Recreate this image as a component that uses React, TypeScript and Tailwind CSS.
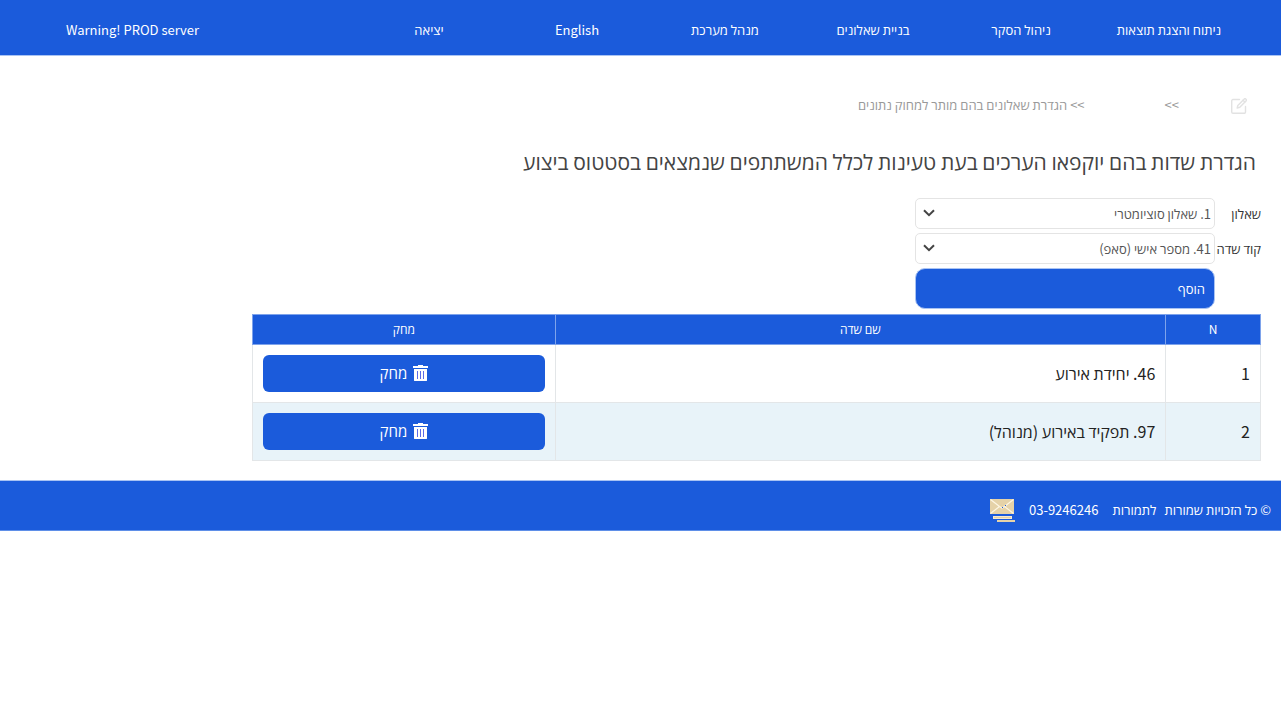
import type { ReactNode } from 'react';

const NAV_ITEMS = [
  'ניתוח והצגת תוצאות',
  'ניהול הסקר',
  'בניית שאלונים',
  'מנהל מערכת',
  'English',
  'יציאה',
];

const FIELDS = [
  { n: 1, name: '46. יחידת אירוע' },
  { n: 2, name: '97. תפקיד באירוע (מנוהל)' },
];

function EditIcon() {
  return (
    <svg viewBox="0 0 16 16" className="size-4" fill="none" stroke="#e2e2e2" strokeWidth="1.4" strokeLinejoin="round" strokeLinecap="round">
      <path d="M8.500 1.500H2A1.300 1.300 0 0 0 .7 2.800V14A1.300 1.300 0 0 0 2 15.300h11.200a1.300 1.300 0 0 0 1.300-1.300V8.500" />
      <path d="M6.200 10l.6-2.600L13.300 .9a1 1 0 0 1 1.400 0l.5.5a1 1 0 0 1 0 1.400L8.800 9.300z" />
      <path d="M12 2.200l1.900 1.900" />
    </svg>
  );
}

function TrashIcon() {
  return (
    <svg viewBox="0 0 15 17" className="h-[17px] w-[15px]">
      <path fill="#fff" d="M5 0h5v1h5v2H0V1h5zM1 4h13v11.500a1 1 0 0 1-1 .5H2a1 1 0 0 1-1-.5z" />
      <path stroke="#5b6be8" d="M4.500 6v8M7.500 6v8M10.500 6v8" />
    </svg>
  );
}

function MailIcon() {
  return (
    <svg viewBox="0 0 25 23" className="h-[23px] w-[25px]">
      <path fill="#e5d2a8" d="M0 0h24v15H0z" />
      <path fill="none" stroke="#fdf6e3" strokeWidth="1.200" d="M.5.5l9 7 2.500 1.500 2.500-1.500 9-7M.5 14.500l9-7M23.500 14.500l-9-7" />
      <path fill="#1b5bdb" d="M12 8h1v1h-1zM15 6h1v1h-1z" />
      <path fill="#f5ead0" d="M3 17h19v3H3z" />
      <path fill="#e5d2a8" d="M4 18h17v1H4zM7 21h18v2H7z" />
    </svg>
  );
}

function SelectRow({ id, label, children }: { id: string; label: string; children: ReactNode }) {
  return (
    <div className="flex items-center">
      <label htmlFor={id} className="w-[46px] shrink-0 whitespace-nowrap text-[#333]">
        {label}
      </label>
      <div className="relative w-[300px]">
        <select
          id={id}
          className="block h-[31px] w-full appearance-none rounded-[5px] border border-[#e4e4e4] bg-white pe-8 ps-[3px] text-[13px] text-[#555]"
        >
          {children}
        </select>
        <svg viewBox="0 0 12 8" className="pointer-events-none absolute left-2 top-[11px] h-2 w-3" fill="none" stroke="#444" strokeWidth="2">
          <path d="M1 1.200l5 5 5-5" />
        </svg>
      </div>
    </div>
  );
}

export default function App() {
  return (
    <div dir="rtl" className="bg-white font-['Noto_Sans_CJK_JP','Open_Sans',sans-serif] text-[13px] leading-5 text-[#333]">
      <header className="border-b border-[#a9c3f3] bg-[#1b5bdb]">
        <nav className="flex h-[55px] items-center ps-[38px] pe-[66px] pt-[5px] text-white">
          {NAV_ITEMS.map((item) => (
            <a key={item} href="#" className="w-[148px] text-center">
              {item}
            </a>
          ))}
          <span dir="ltr" className="mr-auto">Warning! PROD server</span>
        </nav>
      </header>

      <main className="ps-5 pb-[19px]">
        <div className="flex items-center pt-[39px] text-[#999]">
          <a href="#" aria-label="עריכה" className="ms-[14px] me-[52px] pt-[1px]">
            <EditIcon />
          </a>
          <span className="me-20">&gt;&gt;</span>
          <span>&gt;&gt; הגדרת שאלונים בהם מותר למחוק נתונים</span>
        </div>

        <h1 className="mt-8 ps-[5px] text-[21px] leading-7 text-[#444]">
          הגדרת שדות בהם יוקפאו הערכים בעת טעינות לכלל המשתתפים שנמצאים בסטטוס ביצוע
        </h1>

        <form className="mt-[23px] flex flex-col gap-1" onSubmit={(e) => e.preventDefault()}>
          <SelectRow id="questionnaire" label="שאלון">
            <option>1. שאלון סוציומטרי</option>
          </SelectRow>
          <SelectRow id="field" label="קוד שדה">
            <option>41. מספר אישי (סאפ)</option>
          </SelectRow>
          <button className="ms-[46px] h-[41px] w-[300px] rounded-[10px] border border-[#a9c3f3] bg-[#1b5bdb] px-[9px] text-start text-white">
            הוסף
          </button>
        </form>

        <table className="mt-[5px] w-4/5 table-fixed border-collapse border border-[#e3e6e8]">
          <colgroup>
            <col className="w-[9.4%]" />
            <col />
            <col className="w-[30%]" />
          </colgroup>
          <thead>
            <tr className="h-[30px] bg-[#1b5bdb] text-[12px] text-white">
              {['N', 'שם שדה', 'מחק'].map((title) => (
                <th key={title} className="border border-[#7ea3eb] pb-0.5 font-normal">
                  {title}
                </th>
              ))}
            </tr>
          </thead>
          <tbody className="text-[16px] text-[#222]">
            {FIELDS.map((field) => (
              <tr key={field.n} className="h-[58px] even:bg-[#e8f3f9]">
                <td className="border border-[#e3e6e8] px-[10px] pb-0.5">{field.n}</td>
                <td className="border border-[#e3e6e8] px-[10px] pb-0.5">{field.name}</td>
                <td className="border border-[#e3e6e8] px-[10px]">
                  <button className="flex h-[37px] w-full items-center justify-center gap-[6px] rounded-md bg-[#1b5bdb] pb-px text-[15px] text-white">
                    <TrashIcon />
                    מחק
                  </button>
                </td>
              </tr>
            ))}
          </tbody>
        </table>
      </main>

      <footer className="flex h-[51px] items-center border-y border-t-[#a9c3f3] border-b-[#5f8fe8] bg-[#1b5bdb] ps-[10px] pt-2 text-white">
        <span>© כל הזכויות שמורות</span>
        <span className="ms-2">לתמורות</span>
        <span className="ms-[14px]">03-9246246</span>
        <a href="#" aria-label="דואר" className="ms-[14px] pt-0.5">
          <MailIcon />
        </a>
      </footer>
    </div>
  );
}
